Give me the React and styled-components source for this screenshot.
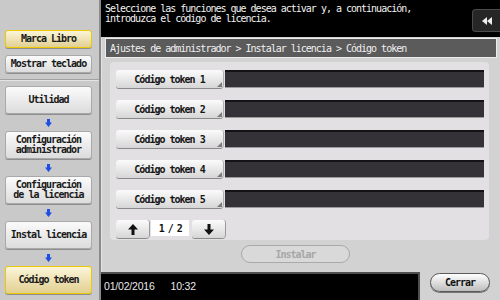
import { Fragment } from "react";
import styled, { createGlobalStyle } from "styled-components";

const GlobalStyle = createGlobalStyle`
  html, body {
    margin: 0;
    padding: 0;
    background: #000;
  }
  body {
    width: 500px;
    height: 300px;
    overflow: hidden;
  }
  * {
    box-sizing: border-box;
  }
`;

const mono = `"DejaVu Sans Mono", "Liberation Mono", monospace`;

const Screen = styled.div`
  display: grid;
  grid-template-columns: 101px 1fr;
  width: 500px;
  height: 300px;
  background: #000;
  font-family: ${mono};
  font-size: 10px;
  letter-spacing: -1px;
`;

const Sidebar = styled.aside`
  display: flex;
  flex-direction: column;
  padding: 30px 7px 0 5px;
  background: #c9c9c9;
  border-right: 2px solid #8a8a8a;
`;

const SideButton = styled.button`
  height: ${(p) => (p.$tall ? 28 : 18)}px;
  margin: 0;
  padding: 0;
  border: 1px solid ${(p) => (p.$active ? "#ecc900" : "#a9a9a9")};
  border-radius: 3px;
  background: ${(p) =>
    p.$active
      ? "linear-gradient(#fbf5d8, #e2d092)"
      : "linear-gradient(#fbfbfb, #dcdcdc)"};
  box-shadow: 0 1px 0 #8e8e8e;
  font-family: ${mono};
  font-weight: bold;
  font-size: 10px;
  line-height: 10px;
  letter-spacing: -1px;
  color: #1a1a1a;
  white-space: pre-line;
`;

const Gap = styled.div`
  height: 7px;
`;

const Divider = styled.div`
  height: 2px;
  margin: 6px -7px 5px -5px;
  border-top: 1px solid #a2a2a2;
  border-bottom: 1px solid #e4e4e4;
`;

const StepArrow = styled.div`
  height: 17px;
  display: flex;
  align-items: center;
  justify-content: center;
`;

const Main = styled.div`
  display: flex;
  flex-direction: column;
  min-width: 0;
`;

const Header = styled.header`
  height: 37px;
  display: flex;
  justify-content: space-between;
  align-items: flex-start;
`;

const Prompt = styled.p`
  margin: 0;
  padding: 4px 0 0 4px;
  color: #f2f2f2;
  font-size: 10px;
  line-height: 10px;
`;

const BackButton = styled.button`
  margin-top: 9px;
  width: 28px;
  height: 23px;
  padding: 0;
  display: flex;
  align-items: center;
  justify-content: center;
  border: 1px solid #4a4a4a;
  border-right: none;
  border-radius: 4px 0 0 4px;
  background: #262626;
`;

const Panel = styled.section`
  flex: 1;
  display: flex;
  flex-direction: column;
  padding: 1px 3px 0 3px;
  background: #d2d2d2;
  border-left: 1px solid #e2e2e2;
`;

const TitleBar = styled.div`
  height: 20px;
  padding: 0 0 0 4px;
  display: flex;
  align-items: center;
  background: #5b5b5b;
  border: 1px solid #ececec;
  color: #f0f0f0;
  font-size: 10px;
`;

const Content = styled.div`
  height: 178px;
  margin: 4px 8px 0 5px;
  padding: 8px 5px 0 6px;
  display: flex;
  flex-direction: column;
  gap: 12px;
  background: #e2e0e2;
  border-radius: 4px;
`;

const Row = styled.div`
  display: flex;
  align-items: flex-start;
  height: 18px;
`;

const TokenButton = styled.button`
  position: relative;
  width: 107px;
  height: 18px;
  margin: 0;
  padding: 0;
  border: none;
  border-radius: 3px;
  background: linear-gradient(#fbfbfb, #d6d6d6);
  box-shadow: 0 1px 0 #8a8a8a, 1px 0 0 #b0b0b0;
  font-family: ${mono};
  font-weight: bold;
  font-size: 10px;
  letter-spacing: -1px;
  color: #151515;

  &::after {
    content: "";
    position: absolute;
    right: 1px;
    bottom: 1px;
    border-style: solid;
    border-width: 0 0 5px 5px;
    border-color: transparent transparent #7a7a7a transparent;
  }
`;

const Field = styled.div`
  flex: 1;
  height: 17px;
  margin-left: 2px;
  background: #343236;
  border-top: 2px solid #141214;
  box-shadow: 0 1px 0 #9a9a9a;
`;

const Pager = styled.div`
  display: flex;
  align-items: flex-start;
  height: 18px;
`;

const PageButton = styled.button`
  width: 33px;
  height: 18px;
  margin: 0 ${(p) => (p.$left ? 2 : 0)}px 0 ${(p) => (p.$right ? 3 : 0)}px;
  padding: 0;
  display: flex;
  align-items: center;
  justify-content: center;
  border: none;
  border-radius: 3px;
  background: linear-gradient(#fbfbfb, #d6d6d6);
  box-shadow: 0 1px 0 #8a8a8a, 1px 0 0 #9a9a9a;
`;

const PageCount = styled.div`
  width: 38px;
  height: 16px;
  display: flex;
  align-items: center;
  justify-content: center;
  background: #fff;
  font-weight: bold;
  font-size: 10px;
  letter-spacing: -1.5px;
  color: #111;
`;

const InstallButton = styled.button`
  width: 109px;
  height: 18px;
  margin: 5px 0 0 136px;
  padding: 0;
  border: 1px solid #a9a9a9;
  border-radius: 9px;
  background: #d9d9d9;
  font-family: ${mono};
  font-weight: bold;
  font-size: 10px;
  letter-spacing: -1px;
  color: #a6a6a6;
`;

const Footer = styled.footer`
  height: 28px;
  display: flex;
`;

const StatusBar = styled.div`
  width: 319px;
  display: flex;
  align-items: center;
  gap: 16px;
  padding: 0 0 2px 3px;
  background: #000;
  border-top: 2px solid #4e4e4e;
  border-right: 2px solid #4e4e4e;
  color: #e8e8e8;
  font-family: "Liberation Sans", Arial, sans-serif;
  font-size: 10.5px;
  letter-spacing: -0.2px;
`;

const CloseZone = styled.div`
  flex: 1;
  padding: 1px 0 0 10px;
  background: #d2d2d2;
`;

const CloseButton = styled.button`
  width: 60px;
  height: 19px;
  margin: 0;
  padding: 0;
  border: 1px solid #5a5a5a;
  border-radius: 10px;
  background: linear-gradient(#ffffff, #bdbdbd);
  box-shadow: 0 1px 0 #777;
  font-family: ${mono};
  font-weight: bold;
  font-size: 10px;
  letter-spacing: -1px;
  color: #111;
`;

const BlueArrow = () => (
  <svg width="7" height="8" viewBox="0 0 7 8">
    <polygon points="2,0 5,0 5,3.5 7,3.5 3.5,8 0,3.5 2,3.5" fill="#1d4fe6" />
  </svg>
);

const UpArrow = ({ down }) => (
  <svg
    width="10"
    height="11"
    viewBox="0 0 10 11"
    style={down ? { transform: "rotate(180deg)" } : undefined}
  >
    <polygon
      points="5,0 10,5.5 6.5,5.5 6.5,11 3.5,11 3.5,5.5 0,5.5"
      fill="#111"
    />
  </svg>
);

const RewindIcon = () => (
  <svg width="10" height="8" viewBox="0 0 10 8">
    <polygon points="5,0 5,8 0,4" fill="#eee" />
    <polygon points="10,0 10,8 5,4" fill="#eee" />
  </svg>
);

const steps = [
  "Utilidad",
  "Configuración\nadministrador",
  "Configuración\nde la licencia",
  "Instal licencia",
];

const tokens = [1, 2, 3, 4, 5];

export default function App() {
  return (
    <>
      <GlobalStyle />
      <Screen>
        <Sidebar>
          <SideButton $active>Marca Libro</SideButton>
          <Gap />
          <SideButton>Mostrar teclado</SideButton>
          <Divider />
          {steps.map((s) => (
            <Fragment key={s}>
              <SideButton $tall>{s}</SideButton>
              <StepArrow>
                <BlueArrow />
              </StepArrow>
            </Fragment>
          ))}
          <SideButton $tall $active>
            Código token
          </SideButton>
        </Sidebar>

        <Main>
          <Header>
            <Prompt>
              Seleccione las funciones que desea activar y, a continuación,
              <br />
              introduzca el código de licencia.
            </Prompt>
            <BackButton>
              <RewindIcon />
            </BackButton>
          </Header>

          <Panel>
            <TitleBar>
              Ajustes de administrador &gt; Instalar licencia &gt; Código token
            </TitleBar>
            <Content>
              {tokens.map((n) => (
                <Row key={n}>
                  <TokenButton>Código token {n}</TokenButton>
                  <Field />
                </Row>
              ))}
              <Pager>
                <PageButton $left>
                  <UpArrow />
                </PageButton>
                <PageCount>1 / 2</PageCount>
                <PageButton $right>
                  <UpArrow down />
                </PageButton>
              </Pager>
            </Content>
            <InstallButton disabled>Instalar</InstallButton>
          </Panel>

          <Footer>
            <StatusBar>
              <span>01/02/2016</span>
              <span>10:32</span>
            </StatusBar>
            <CloseZone>
              <CloseButton>Cerrar</CloseButton>
            </CloseZone>
          </Footer>
        </Main>
      </Screen>
    </>
  );
}
